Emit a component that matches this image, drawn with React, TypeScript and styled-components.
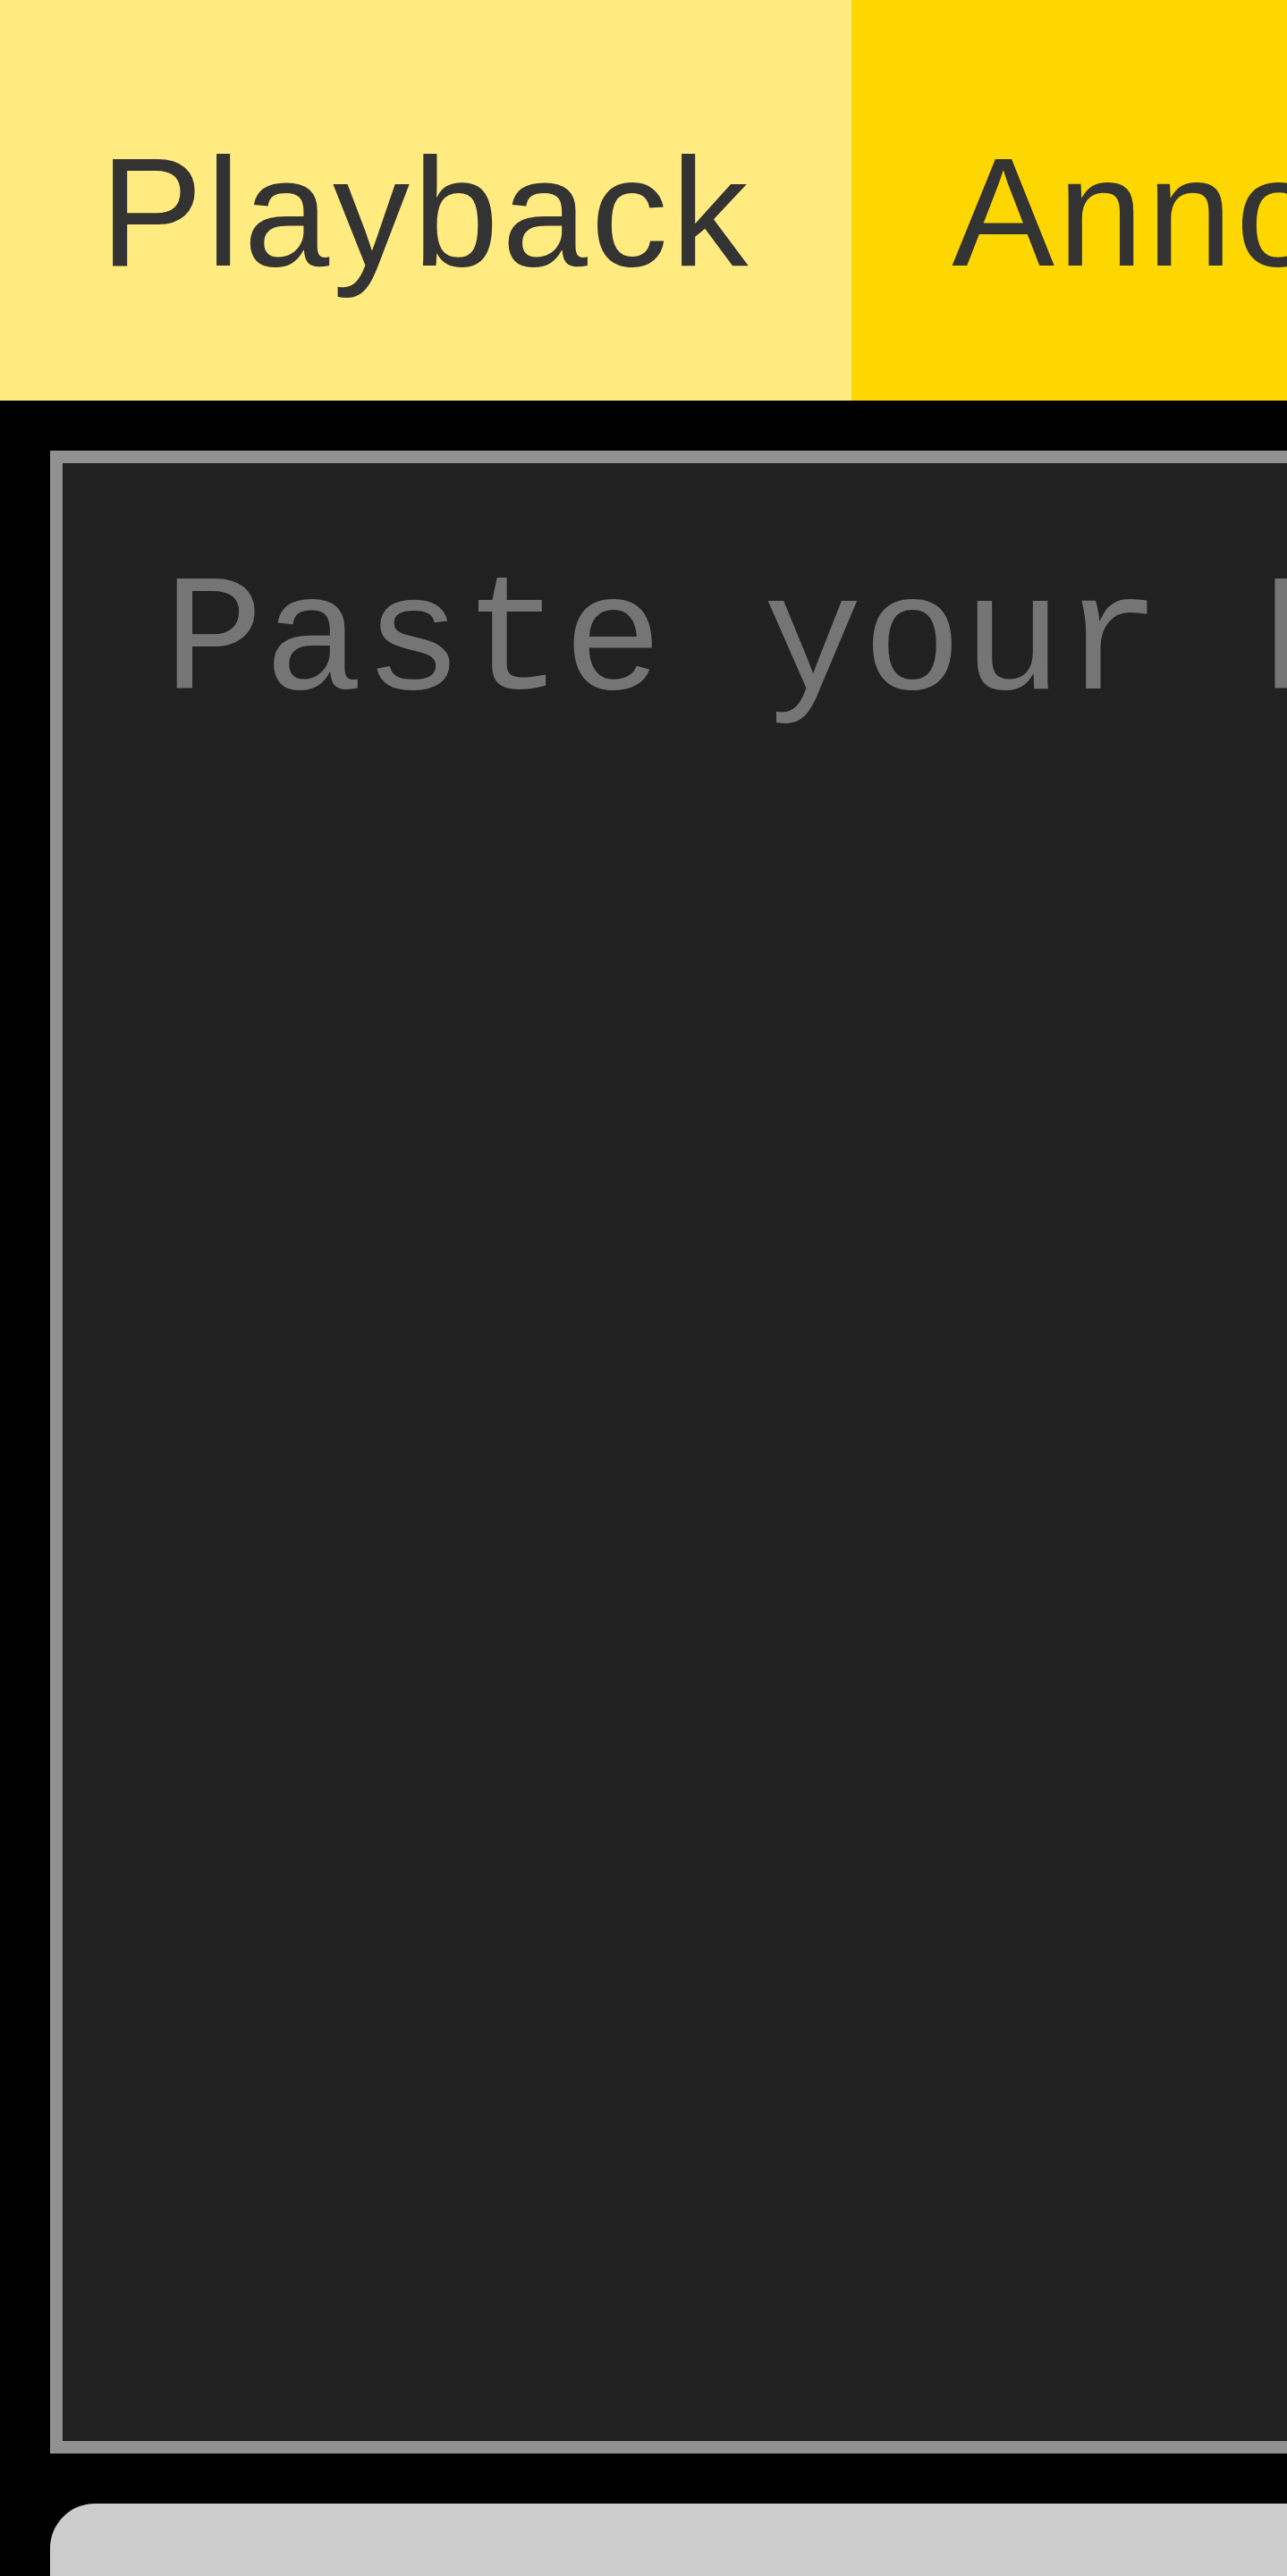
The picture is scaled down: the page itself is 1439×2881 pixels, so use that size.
import React from "react";
import styled, { createGlobalStyle } from "styled-components";

const GlobalStyle = createGlobalStyle`
  html, body {
    margin: 0;
    padding: 0;
    background: #000000;
  }
  * { box-sizing: border-box; }
`;

const Viewport = styled.div`
  width: 100vw;
  overflow: hidden;
  background: #000000;
`;

const Page = styled.main`
  width: 2900px;
  display: flex;
  flex-direction: column;
  gap: 56px;
  padding-bottom: 56px;
`;

const TabBar = styled.nav`
  display: flex;
  height: 448px;
  background: #ffd700;
`;

const Tab = styled.button<{ $active?: boolean }>`
  display: flex;
  align-items: center;
  flex: 0 0 auto;
  height: 448px;
  margin: 0;
  padding: 26px 112px 0;
  border: none;
  border-radius: 0;
  background: ${(p) => (p.$active ? "#ffeb80" : "#ffd700")};
  color: #333333;
  font-family: "Liberation Sans", Arial, sans-serif;
  font-size: 172px;
  line-height: 1;
  letter-spacing: 3.8px;
  white-space: nowrap;
  cursor: pointer;
`;

const Body = styled.section`
  display: flex;
  flex-direction: column;
  gap: 56px;
  padding: 0 56px;
`;

const Editor = styled.textarea`
  display: block;
  width: 100%;
  height: 2240px;
  margin: 0;
  padding: 97px 113px;
  border: 14px solid #919191;
  border-radius: 0;
  background: #212121;
  color: #dddddd;
  font-family: "Liberation Mono", "Courier New", monospace;
  font-size: 186px;
  line-height: normal;
  resize: none;
  outline: none;

  &::placeholder {
    color: #757575;
    opacity: 1;
  }
`;

const ActionButton = styled.button`
  display: block;
  width: 100%;
  height: 360px;
  padding: 100px 56px;
  border: none;
  border-radius: 50px;
  background: #cccccc;
  color: #333333;
  font-family: "Liberation Sans", Arial, sans-serif;
  font-size: 172px;
  cursor: pointer;
`;

export default function App() {
  return (
    <>
      <GlobalStyle />
      <Viewport>
        <Page>
          <TabBar>
            <Tab $active>Playback</Tab>
            <Tab>Annotate</Tab>
          </TabBar>
          <Body>
            <Editor placeholder="Paste your PGN here" />
            <ActionButton>Start</ActionButton>
          </Body>
        </Page>
      </Viewport>
    </>
  );
}
